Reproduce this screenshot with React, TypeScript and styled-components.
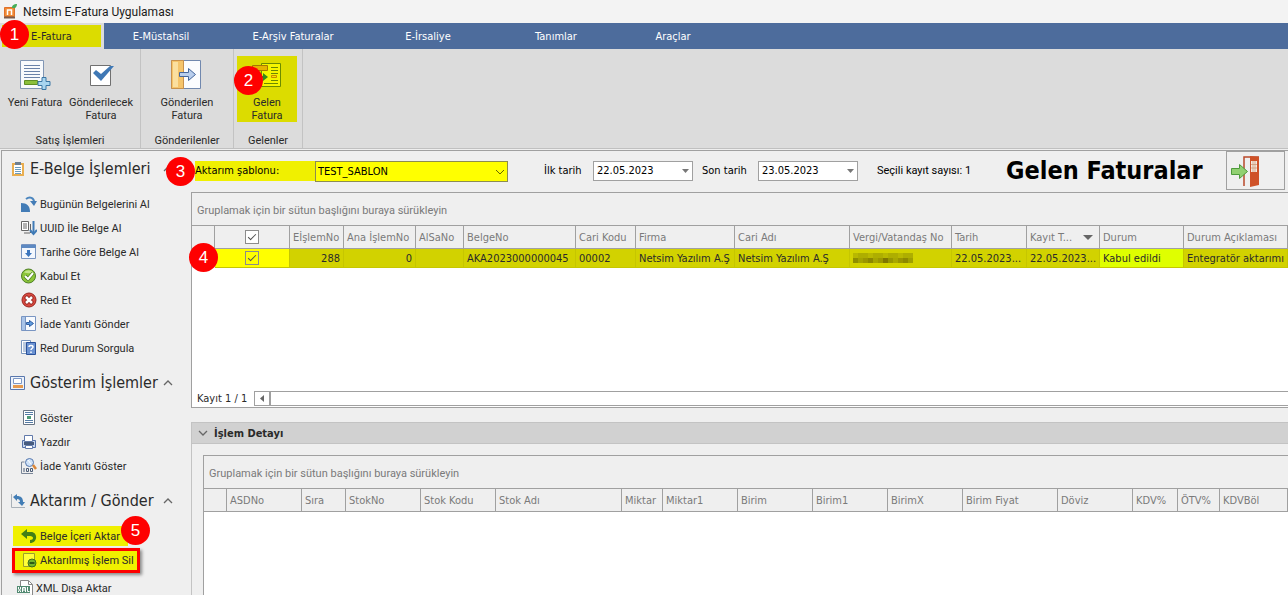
import React from 'react';
import styled, { createGlobalStyle, css } from 'styled-components';

const LINE = '#a0a0a0';
const PANEL = '#efefef';
const NARROW = "Roboto, 'DejaVu Sans', sans-serif";

const GlobalStyle = createGlobalStyle`
  *, *::before, *::after { box-sizing: border-box; }
  body {
    margin: 0;
    background: ${PANEL};
    color: #2a2a2a;
    font: 11px/13px 'DejaVu Sans Condensed', 'DejaVu Sans', sans-serif;
  }
  button, input, select { font: inherit; color: inherit; margin: 0; padding: 0; }
  h1, h2, h3, p, ul { margin: 0; padding: 0; font-weight: normal; }
  svg { display: block; flex: none; }
`;

const Page = styled.div`
  display: flex;
  flex-direction: column;
  height: 100vh;
  overflow: hidden;
`;

const TitleBar = styled.header`
  display: flex;
  align-items: center;
  gap: 5px;
  height: 23px;
  padding-left: 3px;
  background: #f3f3f3;
  color: #1b1b1b;
  font: 12px/16px Roboto, 'Open Sans', sans-serif;
`;

const Menu = styled.nav`
  display: flex;
  height: 26px;
  background: #4d6c9c;
`;

const MenuItem = styled.button<{ $w: number }>`
  width: ${p => p.$w}px;
  border: 0;
  background: none;
  color: #fff;
`;

const ActiveTab = styled.div`
  position: relative;
  width: 104px;
  padding: 2px 3px 2px 2px;
  background: #dcdcdc;
`;

const ActiveTabButton = styled.button`
  width: 99px;
  height: 22px;
  border: 0;
  background: #dcdc00;
`;

const Badge = styled.span<{ $x: number; $y: number }>`
  position: absolute;
  z-index: 2;
  left: ${p => p.$x}px;
  top: ${p => p.$y}px;
  width: 29px;
  height: 29px;
  border-radius: 50%;
  background: #fe0000;
  color: #fff;
  font: 17px/29px 'Liberation Sans', sans-serif;
  text-align: center;
`;

const Ribbon = styled.div`
  display: flex;
  height: 100px;
  background: #dcdcdc;
  border-bottom: 1px solid #c0c0c0;
  font-family: ${NARROW};
`;

const RibbonGroup = styled.section<{ $w: number }>`
  display: flex;
  flex-direction: column;
  justify-content: space-between;
  width: ${p => p.$w}px;
  padding: 7px 3px 1px;
  border-right: 1px solid #c3c3c3;
`;

const RibbonRow = styled.div<{ $center?: boolean }>`
  display: flex;
  justify-content: ${p => (p.$center ? 'center' : 'flex-start')};
`;

const RibbonButton = styled.button<{ $w: number; $active?: boolean }>`
  position: relative;
  display: flex;
  flex-direction: column;
  align-items: center;
  gap: 5px;
  width: ${p => p.$w}px;
  height: 66px;
  padding-top: 3px;
  border: 0;
  background: ${p => (p.$active ? '#dcdc00' : 'none')};
  text-align: center;
`;

const RibbonCaption = styled.h3`
  font-size: 11px;
  line-height: 13px;
  text-align: center;
`;

const Workspace = styled.div`
  display: flex;
  flex: 1;
  min-height: 0;
  margin: 1px 0 0 1px;
  border: solid ${LINE};
  border-width: 1px 0 0 1px;
`;

const Sidebar = styled.aside`
  width: 189px;
  flex: none;
  overflow: hidden;
  font-family: ${NARROW};
`;

const SideHeader = styled.h2`
  display: flex;
  align-items: center;
  gap: 4px;
  height: 36px;
  padding-left: 8px;
  font-family: 'DejaVu Sans Condensed', 'DejaVu Sans', sans-serif;
  font-size: 16px;
  line-height: 22px;
  white-space: nowrap;
`;

const SideTitle = styled.span`
  width: 129px;
`;

const SideToggle = styled.button`
  border: 0;
  background: none;
`;

const SideList = styled.ul`
  padding: 5px 0;
  list-style: none;
`;

const SideRow = styled.li<{ $near?: boolean }>`
  position: relative;
  display: flex;
  align-items: center;
  height: 24px;
  padding-left: 11px;
  ${p => p.$near && css`margin-top: 4px; padding-left: 7px;`}
`;

const SideLink = styled.button<{ $mark?: 'fill' | 'box' }>`
  display: flex;
  align-items: center;
  gap: 3px;
  height: 20px;
  padding: 0 8px;
  border: 0;
  background: none;
  white-space: nowrap;
  ${p => p.$mark === 'fill' && css`background: #f0f000;`}
  ${p => p.$mark === 'box' && css`
    height: 25px;
    margin-left: -1px;
    padding: 0 3px 0 6px;
    border: 3px solid #fe0000;
    background: #f0f000;
    box-shadow: 2px 2px 3px #8a8a8a;
  `}
`;

const Main = styled.main`
  display: flex;
  flex: 1;
  flex-direction: column;
  min-width: 0;
`;

const Toolbar = styled.div`
  position: relative;
  display: flex;
  align-items: center;
  height: 41px;
  padding: 0 3px 2px 4px;
  color: #000;
  white-space: nowrap;
`;

const TemplateField = styled.div`
  display: flex;
  margin: 2px 36px 0 0;
`;

const TemplateLabel = styled.label`
  width: 120px;
  height: 20px;
  line-height: 20px;
  background: #f0f000;
`;

const SelectWrap = styled.span`
  position: relative;
  width: 193px;
`;

const TemplateSelect = styled.select`
  display: block;
  width: 100%;
  height: 21px;
  padding-left: 2px;
  border: 1px solid #8c8c50;
  border-radius: 0;
  appearance: none;
  background: #ff0;
`;

const Arrow = styled.svg`
  position: absolute;
  right: 3px;
  top: 8px;
  pointer-events: none;
`;

const DateLabel = styled.label<{ $w: number }>`
  width: ${p => p.$w}px;
`;

const DateWrap = styled.span`
  position: relative;
  width: 100px;
  margin-right: 9px;
`;

const DateInput = styled.input`
  display: block;
  width: 100%;
  height: 20px;
  padding-left: 3px;
  border: 1px solid ${LINE};
  background: #fff;
`;

const SelectedCount = styled.p`
  width: 129px;
  margin-left: 10px;
  font-family: ${NARROW};
`;

const PageTitle = styled.h1`
  color: #000;
  font-size: 25px;
  line-height: 32px;
  font-weight: bold;
`;

const ExitButton = styled.button`
  width: 59px;
  height: 39px;
  margin-left: auto;
  padding-left: 4px;
  border: 1px solid ${LINE};
  background: none;
`;

const GridPanel = styled.section`
  position: relative;
  display: flex;
  flex: none;
  flex-direction: column;
  border: solid ${LINE};
  border-width: 1px 0 1px 1px;
  background: #fff;
`;

const GroupBand = styled.p`
  height: 32px;
  padding-left: 5px;
  background: ${PANEL};
  color: #7a7a7a;
  font-family: ${NARROW};
  line-height: 35px;
`;

const Table = styled.table`
  width: 100%;
  border-collapse: separate;
  border-spacing: 0;
  table-layout: fixed;
`;

const Th = styled.th`
  height: 24px;
  padding: 0 3px;
  overflow: hidden;
  border: solid ${LINE};
  border-width: 1px 1px 1px 0;
  background: ${PANEL};
  color: #7a7a7a;
  font-weight: normal;
  text-align: left;
  white-space: nowrap;
`;

const SortHead = styled.span`
  display: flex;
  align-items: center;
  justify-content: space-between;
  padding-right: 3px;
`;

const Td = styled.td<{ $bg?: string; $right?: boolean }>`
  height: 19px;
  padding: 0 3px;
  overflow: hidden;
  border-right: 1px solid #c6c600;
  border-bottom: 1px solid #c6c600;
  background: ${p => p.$bg ?? '#d2d200'};
  text-align: ${p => (p.$right ? 'right' : 'left')};
  white-space: nowrap;
`;

const RowMarker = styled.td`
  background: ${PANEL};
`;

const Check = styled.input`
  position: relative;
  display: block;
  width: 14px;
  height: 14px;
  margin: 0 auto;
  border: 1px solid #8c8c8c;
  appearance: none;
  background: ${p => (p.name === 'all' ? '#fff' : '#ff0')};
  &:checked::after {
    content: '';
    position: absolute;
    left: 2px;
    top: 3px;
    width: 8px;
    height: 4px;
    border: solid #505050;
    border-width: 0 0 1px 1px;
    transform: rotate(-45deg);
  }
`;

const GridBody = styled.div`
  height: 123px;
`;

const Footer = styled.footer`
  display: flex;
  align-items: center;
  height: 15px;
  padding-left: 5px;
  margin-bottom: 1px;
  background: #fff;
  white-space: nowrap;
`;

const RecordCount = styled.span`
  width: 57px;
`;

const ScrollBar = styled.div`
  display: flex;
  flex: 1;
  height: 15px;
  border: solid ${LINE};
  border-width: 1px 0 1px 1px;
`;

const ScrollButton = styled.button`
  display: flex;
  align-items: center;
  justify-content: center;
  width: 16px;
  border: 0;
  border-right: 2px solid ${LINE};
  background: #fff;
`;

const Detail = styled.section`
  display: flex;
  flex: 1;
  flex-direction: column;
  margin-top: 14px;
  border: solid #c3c3c3;
  border-width: 1px 0 0 1px;
`;

const DetailHeader = styled.button`
  display: flex;
  align-items: center;
  gap: 6px;
  height: 21px;
  padding-left: 6px;
  border: 0;
  border-bottom: 1px solid #c3c3c3;
  background: #d1d1d1;
  font-weight: bold;
`;

const DetailGrid = styled.div`
  flex: 1;
  margin: 11px 0 0 11px;
  border: solid ${LINE};
  border-width: 1px 0 0 1px;
  background: #fff;
`;

const Svg = ({ s = 16, children }: { s?: number; children: React.ReactNode }) => (
  <svg width={s} height={s} viewBox={`0 0 ${s} ${s}`} fill="none" aria-hidden="true">{children}</svg>
);

const Chevron = ({ down }: { down?: boolean }) => (
  <svg width="10" height="6" viewBox="0 0 10 6" fill="none" aria-hidden="true">
    <path d={down ? 'M1 1l4 4 4-4' : 'M1 5l4-4 4 4'} stroke="#666" strokeWidth="1.3" />
  </svg>
);

const AppLogo = () => (
  <Svg s={15}>
    <path d="M1.5 3.5h10v9h-10z" fill="#f08a35" stroke="#e0702a" />
    <path d="M4.500 11V6h4v5" stroke="#fff" strokeWidth="1.500" />
    <path d="M1 13.500h11" stroke="#7d5a48" strokeWidth="2" />
    <path d="M9 4c0-3 2-4 5-4 0 3-2 5-4 4z" fill="#46ad58" />
  </Svg>
);

const NewInvoiceIcon = () => (
  <Svg s={32}>
    <path d="M1.500 1.500h23v28h-23z" fill="#f8fafc" stroke="#8196b4" />
    <path d="M5 6.500h16M5 9.500h16M5 12.500h16M5 15.500h16M5 18.500h16" stroke="#6a82a8" />
    <path d="M5.500 21.500h13v4h-13z" fill="#8bbf3b" stroke="#5f8f25" />
    <path d="M23 18.500h4v4h4v4h-4v4h-4v-4h-4v-4h4z" fill="#a8d5f0" stroke="#3a76a4" />
  </Svg>
);

const SendCheckIcon = () => (
  <Svg s={32}>
    <path d="M5.500 6.500h20v20h-20z" fill="#fff" stroke="#707070" />
    <path d="M8 14l3-3 5 4 9-8h4L16 22z" fill="#3f78b5" />
  </Svg>
);

const SentIcon = () => (
  <Svg s={32}>
    <path d="M.5 1.500h29v28H.5z" fill="#fbfcfe" stroke="#7188ae" />
    <path d="M.5 1.500h12v28H.5z" fill="#f5c46b" stroke="#c8914c" />
    <path d="M2 3h5v25H2z" fill="#fbdf9f" />
    <path d="M8.500 13.500h9v-4l7 6-7 6v-4h-9z" fill="#b8cdec" stroke="#45669c" />
  </Svg>
);

const IncomingIcon = () => (
  <Svg s={32}>
    <path d="M10.500 4.500h19v23h-19z" fill="#f5f500" stroke="#6c8c00" />
    <path d="M20 8.500h7M20 11.500h7M20 14.500h7M13 24.500h14M20 21.500h7" stroke="#6c8800" />
    <path d="M20.500 16.500h5v2h-5z" fill="#f5e600" stroke="#c98b00" />
    <path d="M1.500 6.500h15v5h-15z" fill="#e6b400" stroke="#a87800" />
    <path d="M9 13c0 3 1 4 3 4v-3l5 4-5 4v-3c-3 0-5-2-5-6z" fill="#348a1a" />
  </Svg>
);

const ClipboardIcon = () => (
  <Svg>
    <path d="M3 3h10v11H3z" fill="#fff" stroke="#e9ae50" strokeWidth="2" />
    <path d="M5 1h6v3H5z" fill="#6e7f91" />
    <path d="M5 6.500h6M5 8.500h6M5 10.500h6M5 12.500h6" stroke="#6c9dbf" />
  </Svg>
);

const ScreenIcon = () => (
  <Svg>
    <path d="M.5 1.500h14v13H.5z" fill="#edf3fb" stroke="#5a78ad" />
    <path d="M3.500 3.500h8v5h-8z" fill="#fff" stroke="#7d97c4" />
    <path d="M3 10h10v3H3z" fill="#e69a50" />
  </Svg>
);

const TransferIcon = () => (
  <Svg>
    <path d="M1.500 1v13.500H15" stroke="#a8b0b8" />
    <path d="M3 4l4-3v2c4 0 6 2 6 6h2l-3 4-4-4h2c0-2-1-3-3-3v2z" fill="#427db5" />
  </Svg>
);

const TodayIcon = () => (
  <Svg>
    <path d="M0 7c6 0 9 3 9 9H0z" fill="#437cb6" />
    <path d="M5 3c4-3 8-1 8 3" stroke="#4c86be" strokeWidth="2" />
    <path d="M9 5h7l-3 5z" fill="#437cb6" />
  </Svg>
);

const UuidIcon = () => (
  <Svg>
    <path d="M.5 1.500h7v9h-7z" fill="#fff" stroke="#666" />
    <path d="M2 4h4M2 6h4M2 8h4M3 13h6M9.500 4v9" stroke="#666" />
    <path d="M12.500 1v12" stroke="#3f7ab6" strokeWidth="2" />
    <path d="M9 10l3.500 4 3.500-4" stroke="#3f7ab6" strokeWidth="2" />
  </Svg>
);

const DateGetIcon = () => (
  <Svg>
    <path d="M.5.500h14v14H.5z" fill="#f3f7fd" stroke="#7894c0" />
    <path d="M0 1h15v3H0z" fill="#5d89c2" />
    <path d="M6 6h3v3h2l-3.500 4L4 9h2z" fill="#3b75bd" />
  </Svg>
);

const AcceptIcon = () => (
  <Svg>
    <circle cx="7.500" cy="8" r="7" fill="#8dc63a" stroke="#4d7f26" />
    <path d="M3 4.500c2-3 7-3 9 0-3 1-6 1-9 0z" fill="#c2e489" />
    <path d="M4 8l3 3 5-6" stroke="#487a22" strokeWidth="3.500" />
    <path d="M4 8l3 3 5-6" stroke="#fff" strokeWidth="2" />
  </Svg>
);

const RejectIcon = () => (
  <Svg>
    <circle cx="8" cy="8" r="7" fill="#d84a40" stroke="#9b2520" />
    <path d="M4.500 4.500l7 7M11.500 4.500l-7 7" stroke="#8c211d" strokeWidth="4" />
    <path d="M5 5l6 6M11 5l-6 6" stroke="#fff" strokeWidth="2.500" />
  </Svg>
);

const ReturnIcon = () => (
  <Svg>
    <path d="M.5.500h14v14H.5z" fill="#f7fafe" stroke="#7995c2" />
    <path d="M1 1h3v13H1z" fill="#a9c4e8" />
    <path d="M4.500.500v14" stroke="#7995c2" />
    <path d="M5.500 6.500h3v-2l4 3-4 3v-2h-3z" fill="#5e9add" stroke="#315fa3" />
  </Svg>
);

const QueryIcon = () => (
  <Svg>
    <path d="M.5.500h9v13h-9z" fill="#fff" stroke="#7895bd" />
    <path d="M2 3h5M2 5h4M2 7h3M2 9h3M2 11h3" stroke="#7895bd" />
    <path d="M5.500 2.500h9v12h-9z" fill="#6c93d2" stroke="#2b529b" />
    <path d="M8 7c0-2 4-2 4 0 0 1.500-2 1.500-2 3M10 11.500v1.500" stroke="#fff" strokeWidth="1.500" />
  </Svg>
);

const ShowIcon = () => (
  <Svg>
    <path d="M2.500.500h11v14h-11z" fill="#fff" stroke="#687585" />
    <path d="M4 2.500h8M4 4.500h8M4 10.500h8M4 12.500h8" stroke="#547ba4" />
    <path d="M6 6h4v3H6z" fill="#4e9a78" />
  </Svg>
);

const PrintIcon = () => (
  <Svg>
    <path d="M1.500 6.500h13v7h-13z" fill="#c8d7ef" stroke="#5470a9" />
    <path d="M3.500 1.500h8v6h-8z" fill="#fff" stroke="#6179aa" />
    <path d="M3 8h10v3H3z" fill="#465b7e" />
    <path d="M4.500 11.500h7v3h-7z" fill="#fff" stroke="#6179aa" />
  </Svg>
);

const FindReturnIcon = () => (
  <Svg>
    <path d="M.5 4v11.500H12M.5 4h3" stroke="#7a8698" />
    <path d="M3 10v4M5.500 10.500h2v3h-2zM9.500 10.500h2v3h-2z" stroke="#4d5d76" />
    <circle cx="8.500" cy="4.500" r="4" fill="#cfe2f8" stroke="#5577ad" />
    <path d="M7 2l3 4" stroke="#fff" />
    <path d="M12 7l3 4" stroke="#db873a" strokeWidth="2.500" />
  </Svg>
);

const ImportIcon = () => (
  <Svg>
    <path d="M0 6l6-5v3h4c7 0 7 11-1 11v-3c4 0 4-4 0-4H6v3z" fill="#438016" />
  </Svg>
);

const DeleteTransferIcon = () => (
  <Svg>
    <path d="M2.500 1.500h11v13h-11z" fill="#ffff38" stroke="#9aa02c" />
    <circle cx="11" cy="11" r="4" fill="#74b52d" stroke="#3f6d19" />
    <path d="M8.500 11h5" stroke="#173f0c" strokeWidth="1.500" />
  </Svg>
);

const XmlIcon = () => (
  <Svg>
    <path d="M3.500 6V.500h8l4 4V15" fill="#fff" stroke="#888" />
    <path d="M11.500.500v4h4" stroke="#888" />
    <path d="M0 6h13v7H0z" fill="#528a72" />
    <path d="M1.500 7v2l2 2v1M3.500 7v2l-2 2v1M5.500 12V7.500h3V12M7 8v3M10.500 7v4.500h2" stroke="#fff" />
  </Svg>
);

const ExitIcon = () => (
  <svg width="30" height="32" viewBox="0 0 30 32" fill="none" aria-hidden="true">
    <path d="M13 31V2h15" stroke="#b94a2b" strokeWidth="1.500" />
    <path d="M19 1l9 1v28l-9 2z" fill="#cf5228" />
    <path d="M20 6h6v11h-6z" fill="#f5e8df" />
    <path d="M22 6v11M24 6v11M20 9.500h6M20 13h6" stroke="#c9926f" strokeWidth=".7" />
    <path d="M.5 13.500h8v-4l8 7-8 7v-4h-8z" fill="#91d071" stroke="#4e9a3c" />
  </svg>
);

type Item = { label: string; icon: React.ReactNode; mark?: 'fill' | 'box'; badge?: string; near?: boolean };
type Section = { title: string; icon: React.ReactNode; items: Item[] };

const sections: Section[] = [
  {
    title: 'E-Belge İşlemleri',
    icon: <ClipboardIcon />,
    items: [
      { label: 'Bugünün Belgelerini Al', icon: <TodayIcon /> },
      { label: 'UUID İle Belge Al', icon: <UuidIcon /> },
      { label: 'Tarihe Göre Belge Al', icon: <DateGetIcon /> },
      { label: 'Kabul Et', icon: <AcceptIcon /> },
      { label: 'Red Et', icon: <RejectIcon /> },
      { label: 'İade Yanıtı Gönder', icon: <ReturnIcon /> },
      { label: 'Red Durum Sorgula', icon: <QueryIcon /> },
    ],
  },
  {
    title: 'Gösterim İşlemler',
    icon: <ScreenIcon />,
    items: [
      { label: 'Göster', icon: <ShowIcon /> },
      { label: 'Yazdır', icon: <PrintIcon /> },
      { label: 'İade Yanıtı Göster', icon: <FindReturnIcon /> },
    ],
  },
  {
    title: 'Aktarım / Gönder',
    icon: <TransferIcon />,
    items: [
      { label: 'Belge İçeri Aktar', icon: <ImportIcon />, mark: 'fill', badge: '5' },
      { label: 'Aktarılmış İşlem Sil', icon: <DeleteTransferIcon />, mark: 'box' },
      { label: 'XML Dışa Aktar', icon: <XmlIcon />, near: true },
    ],
  },
];

const menu: [string, number][] = [
  ['E-Müstahsil', 114],
  ['E-Arşiv Faturalar', 150],
  ['E-İrsaliye', 120],
  ['Tanımlar', 136],
  ['Araçlar', 98],
];

const invoiceCols: [string, number][] = [
  ['EİşlemNo', 54], ['Ana İşlemNo', 72], ['AlSaNo', 48], ['BelgeNo', 112], ['Cari Kodu', 60],
  ['Firma', 99], ['Cari Adı', 115], ['Vergi/Vatandaş No', 102], ['Tarih', 75], ['Kayıt T...', 73], ['Durum', 84],
  ['Durum Açıklaması', 0],
];

const detailCols: [string, number][] = [
  ['ASDNo', 75], ['Sıra', 44], ['StokNo', 75], ['Stok Kodu', 75], ['Stok Adı', 126], ['Miktar', 41],
  ['Miktar1', 75], ['Birim', 75], ['Birim1', 75], ['BirimX', 75], ['Birim Fiyat', 95], ['Döviz', 75],
  ['KDV%', 45], ['ÖTV%', 42], ['KDVBöl', 0],
];

const maskTones = ['#8f8f00', '#a3a300', '#9a9600', '#8b8700', '#a5a500', '#9b9700', '#7f7700', '#969600', '#a8a800', '#999500', '#8d8900', '#a0a000'];

const MaskedNumber = () => (
  <svg width="60" height="10" viewBox="0 0 60 10" role="img" aria-label="Gizli numara">
    {maskTones.map((tone, i) => (
      <React.Fragment key={i}>
        <rect x={i * 5} width="5" height="5" fill={i % 3 ? '#aeae00' : '#b8b800'} />
        <rect x={i * 5} y="5" width="5" height="5" fill={tone} />
      </React.Fragment>
    ))}
  </svg>
);

const DateField = ({ id, label, value, w }: { id: string; label: string; value: string; w: number }) => (
  <>
    <DateLabel htmlFor={id} $w={w}>{label}</DateLabel>
    <DateWrap>
      <DateInput id={id} defaultValue={value} />
      <Arrow width="8" height="5" viewBox="0 0 8 5"><path d="M0 0h7L3.500 4z" fill="#777" /></Arrow>
    </DateWrap>
  </>
);

export default function App() {
  return (
    <Page>
      <GlobalStyle />
      <TitleBar><AppLogo />Netsim E-Fatura Uygulaması</TitleBar>
      <Menu>
        <ActiveTab>
          <ActiveTabButton>E-Fatura</ActiveTabButton>
          <Badge $x={0} $y={-3}>1</Badge>
        </ActiveTab>
        {menu.map(([label, w]) => <MenuItem key={label} $w={w}>{label}</MenuItem>)}
      </Menu>
      <Ribbon>
        <RibbonGroup $w={141}>
          <RibbonRow>
            <RibbonButton $w={64}><NewInvoiceIcon />Yeni Fatura</RibbonButton>
            <RibbonButton $w={68}><SendCheckIcon />Gönderilecek<br />Fatura</RibbonButton>
          </RibbonRow>
          <RibbonCaption>Satış İşlemleri</RibbonCaption>
        </RibbonGroup>
        <RibbonGroup $w={93}>
          <RibbonRow $center><RibbonButton $w={60}><SentIcon />Gönderilen Fatura</RibbonButton></RibbonRow>
          <RibbonCaption>Gönderilenler</RibbonCaption>
        </RibbonGroup>
        <RibbonGroup $w={69}>
          <RibbonRow>
            <RibbonButton $w={60} $active>
              <IncomingIcon />Gelen<br />Fatura
              <Badge $x={-3} $y={10}>2</Badge>
            </RibbonButton>
          </RibbonRow>
          <RibbonCaption>Gelenler</RibbonCaption>
        </RibbonGroup>
      </Ribbon>
      <Workspace>
        <Sidebar>
          {sections.map(section => (
            <section key={section.title}>
              <SideHeader>
                {section.icon}
                <SideTitle>{section.title}</SideTitle>
                <SideToggle aria-label={section.title}><Chevron /></SideToggle>
              </SideHeader>
              <SideList>
                {section.items.map(item => (
                  <SideRow key={item.label} $near={item.near}>
                    <SideLink $mark={item.mark}>{item.icon}{item.label}</SideLink>
                    {item.badge && <Badge $x={119} $y={-8}>{item.badge}</Badge>}
                  </SideRow>
                ))}
              </SideList>
            </section>
          ))}
        </Sidebar>
        <Main>
          <Toolbar>
            <Badge $x={-25} $y={6}>3</Badge>
            <TemplateField>
              <TemplateLabel htmlFor="template">Aktarım şablonu:</TemplateLabel>
              <SelectWrap>
                <TemplateSelect id="template"><option>TEST_SABLON</option></TemplateSelect>
                <Arrow width="10" height="6" viewBox="0 0 10 6" fill="none"><path d="M1 1l4 4 4-4" stroke="#666600" /></Arrow>
              </SelectWrap>
            </TemplateField>
            <DateField id="from" label="İlk tarih" value="22.05.2023" w={49} />
            <DateField id="to" label="Son tarih" value="23.05.2023" w={56} />
            <SelectedCount>Seçili kayıt sayısı: 1</SelectedCount>
            <PageTitle>Gelen Faturalar</PageTitle>
            <ExitButton aria-label="Çıkış"><ExitIcon /></ExitButton>
          </Toolbar>
          <GridPanel>
            <GroupBand>Gruplamak için bir sütun başlığını buraya sürükleyin</GroupBand>
            <Table>
              <colgroup>
                <col style={{ width: 23 }} />
                <col style={{ width: 75 }} />
                {invoiceCols.map(([name, w]) => <col key={name} style={{ width: w || undefined }} />)}
              </colgroup>
              <thead>
                <tr>
                  <Th />
                  <Th><Check type="checkbox" name="all" aria-label="Tümünü seç" defaultChecked /></Th>
                  {invoiceCols.map(([name]) => (
                    <Th key={name}>
                      {name === 'Kayıt T...' ? (
                        <SortHead>{name}<svg width="10" height="5" viewBox="0 0 10 5"><path d="M0 0h10L5 5z" fill="#666" /></svg></SortHead>
                      ) : name}
                    </Th>
                  ))}
                </tr>
              </thead>
              <tbody>
                <tr>
                  <RowMarker />
                  <Td $bg="#ff0"><Check type="checkbox" name="row" aria-label="Kaydı seç" defaultChecked /></Td>
                  <Td $right>288</Td>
                  <Td $right>0</Td>
                  <Td />
                  <Td>AKA2023000000045</Td>
                  <Td>00002</Td>
                  <Td>Netsim Yazılım A.Ş</Td>
                  <Td>Netsim Yazılım A.Ş</Td>
                  <Td><MaskedNumber /></Td>
                  <Td>22.05.2023...</Td>
                  <Td>22.05.2023...</Td>
                  <Td $bg="#dfff00">Kabul edildi</Td>
                  <Td>Entegratör aktarımı</Td>
                </tr>
              </tbody>
            </Table>
            <Badge $x={-3} $y={50}>4</Badge>
            <GridBody />
            <Footer>
              <RecordCount>Kayıt 1 / 1</RecordCount>
              <ScrollBar>
                <ScrollButton aria-label="Sola kaydır"><svg width="4" height="7" viewBox="0 0 4 7"><path d="M4 0v7L0 3.500z" fill="#666" /></svg></ScrollButton>
              </ScrollBar>
            </Footer>
          </GridPanel>
          <Detail>
            <DetailHeader><Chevron down />İşlem Detayı</DetailHeader>
            <DetailGrid>
              <GroupBand>Gruplamak için bir sütun başlığını buraya sürükleyin</GroupBand>
              <Table>
                <colgroup>
                  <col style={{ width: 23 }} />
                  {detailCols.map(([name, w]) => <col key={name} style={{ width: w || undefined }} />)}
                </colgroup>
                <thead>
                  <tr>
                    <Th />
                    {detailCols.map(([name]) => <Th key={name}>{name}</Th>)}
                  </tr>
                </thead>
              </Table>
            </DetailGrid>
          </Detail>
        </Main>
      </Workspace>
    </Page>
  );
}
